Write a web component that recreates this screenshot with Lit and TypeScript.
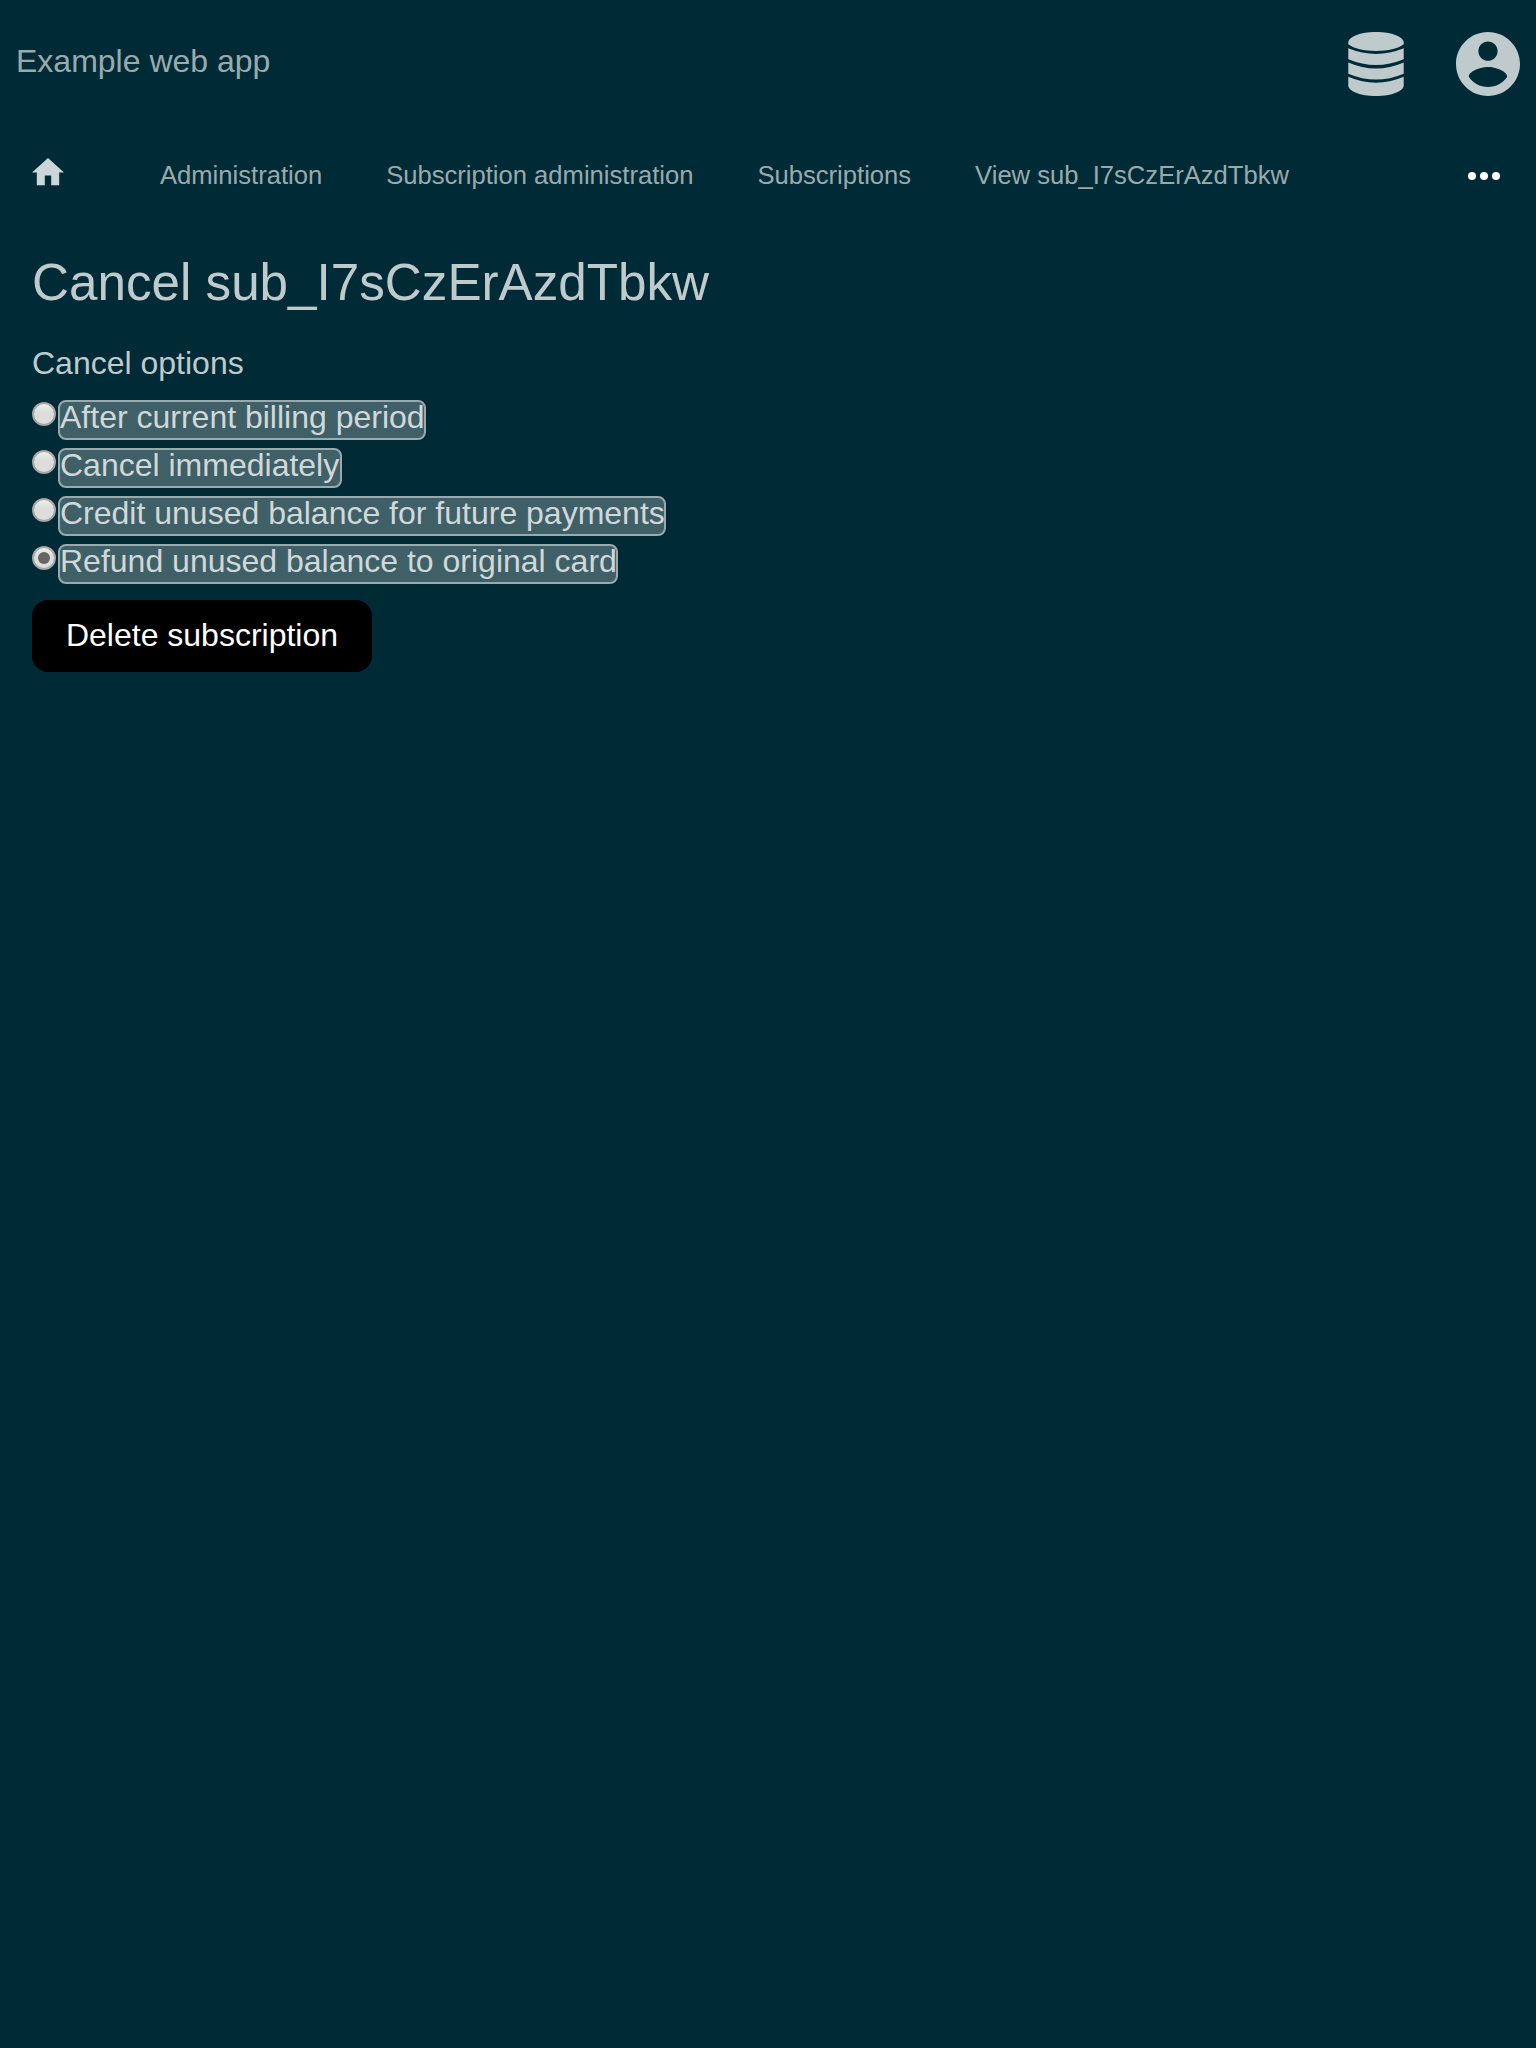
import { LitElement, html, css } from "lit";
import { customElement, state } from "lit/decorators.js";
import { classMap } from "lit/directives/class-map.js";
import { styleMap } from "lit/directives/style-map.js";

const CRUMBS = [
  "Administration",
  "Subscription administration",
  "Subscriptions",
  "View sub_I7sCzErAzdTbkw",
];

const OPTIONS = [
  { text: "After current billing period", width: 368 },
  { text: "Cancel immediately", width: 284 },
  { text: "Credit unused balance for future payments", width: 608 },
  { text: "Refund unused balance to original card", width: 560 },
];

@customElement("app-root")
export class AppRoot extends LitElement {
  @state() private selected = 3;

  static styles = css`
    :host {
      display: block;
      box-sizing: border-box;
      min-height: 100vh;
      background: #002b36;
      font: 32px/36px "Liberation Sans", Arial, sans-serif;
      color: #bfcacd;
    }
    svg { display: block; flex: none; }
    .header {
      display: flex;
      align-items: center;
      height: 128px;
      box-sizing: border-box;
      padding: 0 16px;
      gap: 52px;
    }
    .brand { flex: 1; color: #99aaaf; padding-bottom: 6px; }
    .nav {
      display: flex;
      align-items: center;
      height: 96px;
      box-sizing: border-box;
      padding: 0 36px 0 32px;
      font-size: 25.6px;
      line-height: 30px;
      color: #99aaaf;
    }
    .home { margin: -8px 96px 0 0; }
    .crumbs { display: flex; gap: 64px; flex: 1; white-space: nowrap; padding-bottom: 2px; }
    .content { padding: 32px; display: flex; flex-direction: column; align-items: flex-start; }
    h1 { margin: 0; font-weight: 400; font-size: 51.2px; line-height: 53px; }
    h2 { margin: 35px 0 18px; font-weight: 400; font-size: 32px; line-height: 38px; }
    .option { display: flex; align-items: flex-start; height: 48px; gap: 2px; cursor: pointer; }
    .radio {
      box-sizing: border-box;
      width: 24px;
      height: 24px;
      margin-top: 2px;
      border: 2px solid #a5a5a5;
      border-radius: 50%;
      background: linear-gradient(#ededed, #dcdcdc 45%, #dedede);
      display: grid;
      place-items: center;
    }
    .radio.on::after {
      content: "";
      width: 12px;
      height: 12px;
      border-radius: 50%;
      background: #666;
    }
    .label {
      box-sizing: border-box;
      height: 40px;
      line-height: 30px;
      border: 2px solid #99aaaf;
      border-radius: 8px;
      background: #406067;
      color: #d0d8da;
      white-space: nowrap;
    }
    .submit {
      margin: 8px 0 0;
      height: 72px;
      width: 340px;
      padding: 0 0 2px;
      border: 0;
      border-radius: 16px;
      background: #000;
      color: #fff;
      font: inherit;
    }
  `;

  render() {
    return html`
      <header class="header">
        <div class="brand">Example web app</div>
        <svg width="56" height="64" viewBox="0 0 56 64" fill="#bfcacd">
          <path d="M28 0C44 0 55.700 5 55.700 10.500V12.300C50 16.800 40 19 28 19S6 16.800 .300 12.300V10.500C.300 5 12 0 28 0Z" />
          <path d="M.300 16.300Q28 27.700 55.700 16.300V27.200Q28 38.800 .300 27.200Z" />
          <path d="M.300 30.600Q28 42.600 55.700 30.600V41.700Q28 53.500 .300 41.700Z" />
          <path d="M.300 44.800Q28 56.700 55.700 44.800V53.500C55.700 59 44 64 28 64S.300 59 .300 53.500Z" />
        </svg>
        <svg width="64" height="64" viewBox="2 2 20 20" fill="#bfcacd">
          <path d="M12 2C6.480 2 2 6.480 2 12s4.480 10 10 10 10-4.480 10-10S17.520 2 12 2zm0 3c1.660 0 3 1.340 3 3s-1.340 3-3 3-3-1.340-3-3 1.340-3 3-3zm0 14.200c-2.500 0-4.710-1.280-6-3.220.030-1.990 4-3.080 6-3.080 1.990 0 5.970 1.090 6 3.080-1.290 1.940-3.500 3.220-6 3.220z" />
        </svg>
      </header>
      <nav class="nav">
        <svg class="home" width="32" height="27.2" viewBox="2 3 20 17" fill="#ccd5d7">
          <path d="M10 20v-6h4v6h5v-8h3L12 3 2 12h3v8z" />
        </svg>
        <div class="crumbs">${CRUMBS.map((c) => html`<span>${c}</span>`)}</div>
        <svg width="32" height="8" viewBox="0 0 32 8" fill="#fff">
          <circle cx="4" cy="4" r="4" /><circle cx="16" cy="4" r="4" /><circle cx="28" cy="4" r="4" />
        </svg>
      </nav>
      <main class="content">
        <h1>Cancel sub_I7sCzErAzdTbkw</h1>
        <h2>Cancel options</h2>
        ${OPTIONS.map(
          (o, i) => html`<div class="option" @click=${() => (this.selected = i)}>
            <span class=${classMap({ radio: true, on: i === this.selected })}></span>
            <span class="label" style=${styleMap({ width: `${o.width}px` })}>${o.text}</span>
          </div>`,
        )}
        <button class="submit">Delete subscription</button>
      </main>
    `;
  }
}
